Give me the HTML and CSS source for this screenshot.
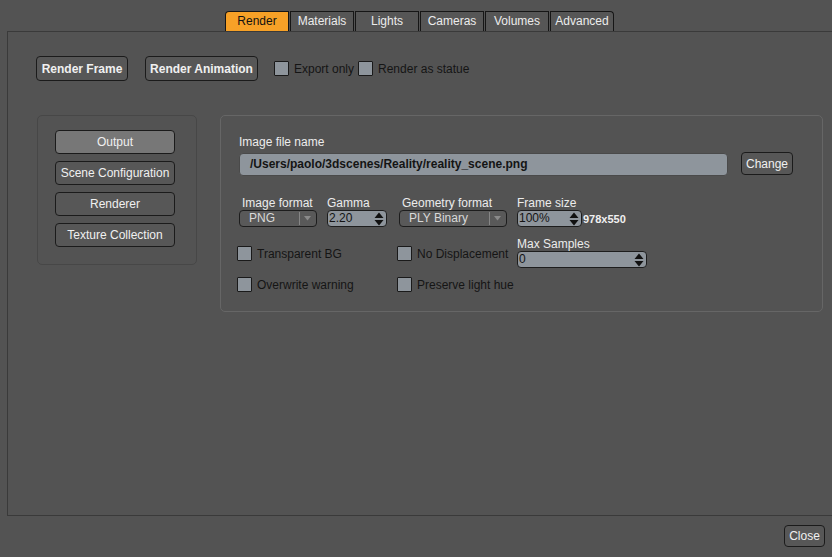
FILE: index.html
```html
<!DOCTYPE html>
<html>
<head>
<meta charset="utf-8">
<link rel="stylesheet" href="styles.css">
</head>
<body>
<div class="tabs">
  <div class="tab active first">Render</div>
  <div class="tab">Materials</div>
  <div class="tab">Lights</div>
  <div class="tab">Cameras</div>
  <div class="tab">Volumes</div>
  <div class="tab last">Advanced</div>
</div>
<div class="main">
  <div class="toprow">
    <button class="btn bold w92">Render Frame</button>
    <button class="btn bold w113">Render Animation</button>
    <label class="chk"><span class="box"></span>Export only</label>
    <label class="chk tight"><span class="box"></span>Render as statue</label>
  </div>
  <div class="panels">
    <div class="leftpanel">
      <button class="btn side selected">Output</button>
      <button class="btn side">Scene Configuration</button>
      <button class="btn side">Renderer</button>
      <button class="btn side">Texture Collection</button>
    </div>
    <div class="rightpanel">
      <div class="lbl">Image file name</div>
      <div class="filerow">
        <div class="fileinput">/Users/paolo/3dscenes/Reality/reality_scene.png</div>
        <button class="btn change">Change</button>
      </div>
      <div class="grid">
        <div class="c1 row1">
          <div class="fld">
            <div class="flbl ind">Image format</div>
            <div class="select w78"><span>PNG</span><i class="sep"></i><svg class="dd" width="7" height="5" viewBox="0 0 7 5"><path d="M0 0H7L3.5 4.5Z" fill="#8a8a8a"/></svg></div>
          </div>
          <div class="fld gamma">
            <div class="flbl">Gamma</div>
            <div class="spin w60"><span>2.20</span><svg class="arr" width="10" height="14" viewBox="0 0 10 14"><path d="M5 0.5L9.5 6H0.5Z M0.5 8H9.5L5 13.5Z" fill="#111"/></svg></div>
          </div>
        </div>
        <div class="c2 row1">
          <div class="fld">
            <div class="flbl ind">Geometry format</div>
            <div class="select w108"><span>PLY Binary</span><i class="sep"></i><svg class="dd" width="7" height="5" viewBox="0 0 7 5"><path d="M0 0H7L3.5 4.5Z" fill="#8a8a8a"/></svg></div>
          </div>
        </div>
        <div class="c3 row1">
          <div class="fld">
            <div class="flbl">Frame size</div>
            <div class="framerow">
              <div class="spin w65"><span>100%</span><svg class="arr" width="10" height="14" viewBox="0 0 10 14"><path d="M5 0.5L9.5 6H0.5Z M0.5 8H9.5L5 13.5Z" fill="#111"/></svg></div>
              <span class="dims">978x550</span>
            </div>
          </div>
        </div>
        <div class="c1 row2"><label class="chk2"><span class="box"></span>Transparent BG</label></div>
        <div class="c2 row2"><label class="chk2"><span class="box"></span>No Displacement</label></div>
        <div class="c3 row2">
          <div class="flbl">Max Samples</div>
          <div class="spin w130"><span>0</span><svg class="arr" width="10" height="14" viewBox="0 0 10 14"><path d="M5 0.5L9.5 6H0.5Z M0.5 8H9.5L5 13.5Z" fill="#111"/></svg></div>
        </div>
        <div class="c1 row3"><label class="chk2"><span class="box"></span>Overwrite warning</label></div>
        <div class="c2 row3"><label class="chk2"><span class="box"></span>Preserve light hue</label></div>
      </div>
    </div>
  </div>
</div>
<div class="footer">
  <button class="btn close">Close</button>
</div>
</body>
</html>
```

FILE: styles.css
```css
html, body {
  margin: 0;
  padding: 0;
  width: 832px;
  height: 557px;
  overflow: hidden;
  background: #535353;
  font-family: "Liberation Sans", Arial, sans-serif;
  font-size: 12px;
  color: #ececec;
}

.tabs {
  display: flex;
  gap: 1px;
  padding: 11px 0 0 225px;
  height: 20px;
}
.tab {
  box-sizing: border-box;
  width: 64px;
  height: 20px;
  border: 1px solid #161616;
  border-bottom: none;
  background: #565656;
  color: #ececec;
  font-size: 12px;
  line-height: 19px;
  text-align: center;
}
.tab.first { border-top-left-radius: 4px; }
.tab.last { border-top-right-radius: 4px; }
.tab.active {
  background: #f7a127;
  color: #111;
}

.main {
  box-sizing: border-box;
  margin-left: 7px;
  width: 840px;
  height: 485px;
  border: 1px solid #3a3a3a;
  border-right: none;
  padding: 24px 0 0 28px;
}

.btn {
  box-sizing: border-box;
  font-family: "Liberation Sans", Arial, sans-serif;
  font-size: 12px;
  color: #f0f0f0;
  background: #575757;
  border: 1px solid #1b1b1b;
  border-radius: 4px;
  padding: 0;
  margin: 0;
  cursor: default;
}
.bold { font-weight: bold; }

.toprow {
  display: flex;
  align-items: center;
  height: 25px;
}
.w92 { width: 92px; height: 25px; }
.w113 { width: 113px; height: 25px; margin-left: 17px; }

.chk {
  display: flex;
  align-items: center;
  color: #151515;
  font-size: 12px;
  margin-left: 16px;
}
.chk.tight { margin-left: 4px; }
.box {
  display: inline-block;
  box-sizing: border-box;
  width: 15px;
  height: 15px;
  background: #8e959c;
  border: 1px solid #1a1a1a;
  border-radius: 1px;
  margin-right: 5px;
}

.panels {
  display: flex;
  align-items: flex-start;
  margin-top: 34px;
}
.leftpanel {
  box-sizing: border-box;
  margin-left: 1px;
  width: 160px;
  height: 150px;
  border: 1px solid #474747;
  border-radius: 5px;
  padding: 14px 0 0 17px;
  display: flex;
  flex-direction: column;
  gap: 7px;
}
.side {
  width: 120px;
  height: 24px;
}
.side.selected {
  background: #777777;
}

.rightpanel {
  box-sizing: border-box;
  margin-left: 23px;
  width: 603px;
  height: 197px;
  border: 1px solid #666666;
  border-radius: 5px;
  padding: 19px 0 0 18px;
}
.lbl {
  line-height: 14px;
  height: 14px;
  color: #ececec;
}
.filerow {
  display: flex;
  align-items: center;
  margin-top: 4px;
}
.fileinput {
  box-sizing: border-box;
  width: 489px;
  height: 23px;
  background: #8e959c;
  border: 1px solid #4a4a4a;
  border-radius: 4px;
  color: #141414;
  font-weight: bold;
  font-size: 12px;
  line-height: 21px;
  padding-left: 10px;
}
.change {
  width: 52px;
  height: 23px;
  margin-left: 13px;
  margin-top: -2px;
}

.grid {
  display: grid;
  grid-template-columns: 160px 120px 1fr;
  margin-top: 21px;
  margin-left: -2px;
}
.row1 { grid-row: 1; }
.row2 { grid-row: 2; }
.row3 { grid-row: 3; }
.c1 { grid-column: 1; }
.c2 { grid-column: 2; }
.c3 { grid-column: 3; }
.c1.row1, .c2.row1 { display: flex; padding-left: 2px; }

.fld { display: flex; flex-direction: column; }
.gamma { margin-left: 10px; }
.flbl {
  line-height: 13px;
  height: 13px;
  color: #ececec;
  white-space: nowrap;
}
.flbl.ind { padding-left: 3px; }

.select {
  box-sizing: border-box;
  height: 17px;
  border: 1px solid #1d1d1d;
  border-radius: 4px;
  background: #595959;
  color: #d8d8d8;
  display: flex;
  align-items: center;
}
.select span { padding-left: 9px; flex: 1; line-height: 15px; }
.select .sep {
  width: 1px;
  height: 13px;
  background: #858585;
  margin-right: 4px;
}
.select .dd { margin-right: 5px; }
.w78 { width: 78px; }
.w108 { width: 108px; }

.spin {
  box-sizing: border-box;
  height: 17px;
  border: 1px solid #1d1d1d;
  border-radius: 4px;
  background: #8e959c;
  color: #141414;
  display: flex;
  align-items: center;
  font-size: 12px;
}
.spin span { flex: 1; padding-left: 1px; line-height: 15px; }
.spin .arr { margin-right: 2px; }
.w60 { width: 60px; }
.w65 { width: 65px; }
.w130 { width: 130px; }

.framerow { display: flex; align-items: center; }
.dims {
  font-size: 11px;
  font-weight: bold;
  color: #f0f0f0;
  margin-left: 1px;
}

.row2.c1, .row2.c2 { margin-top: 19px; }
.c3.row2 { grid-row: 2 / span 2; margin-top: 11px; }
.row3.c1, .row3.c2 { padding-top: 16px; }

.chk2 {
  display: flex;
  align-items: center;
  color: #151515;
  height: 15px;
}

.footer {
  display: flex;
  justify-content: flex-end;
  padding-right: 7px;
  margin-top: 9px;
}
.close {
  width: 41px;
  height: 22px;
}
```
